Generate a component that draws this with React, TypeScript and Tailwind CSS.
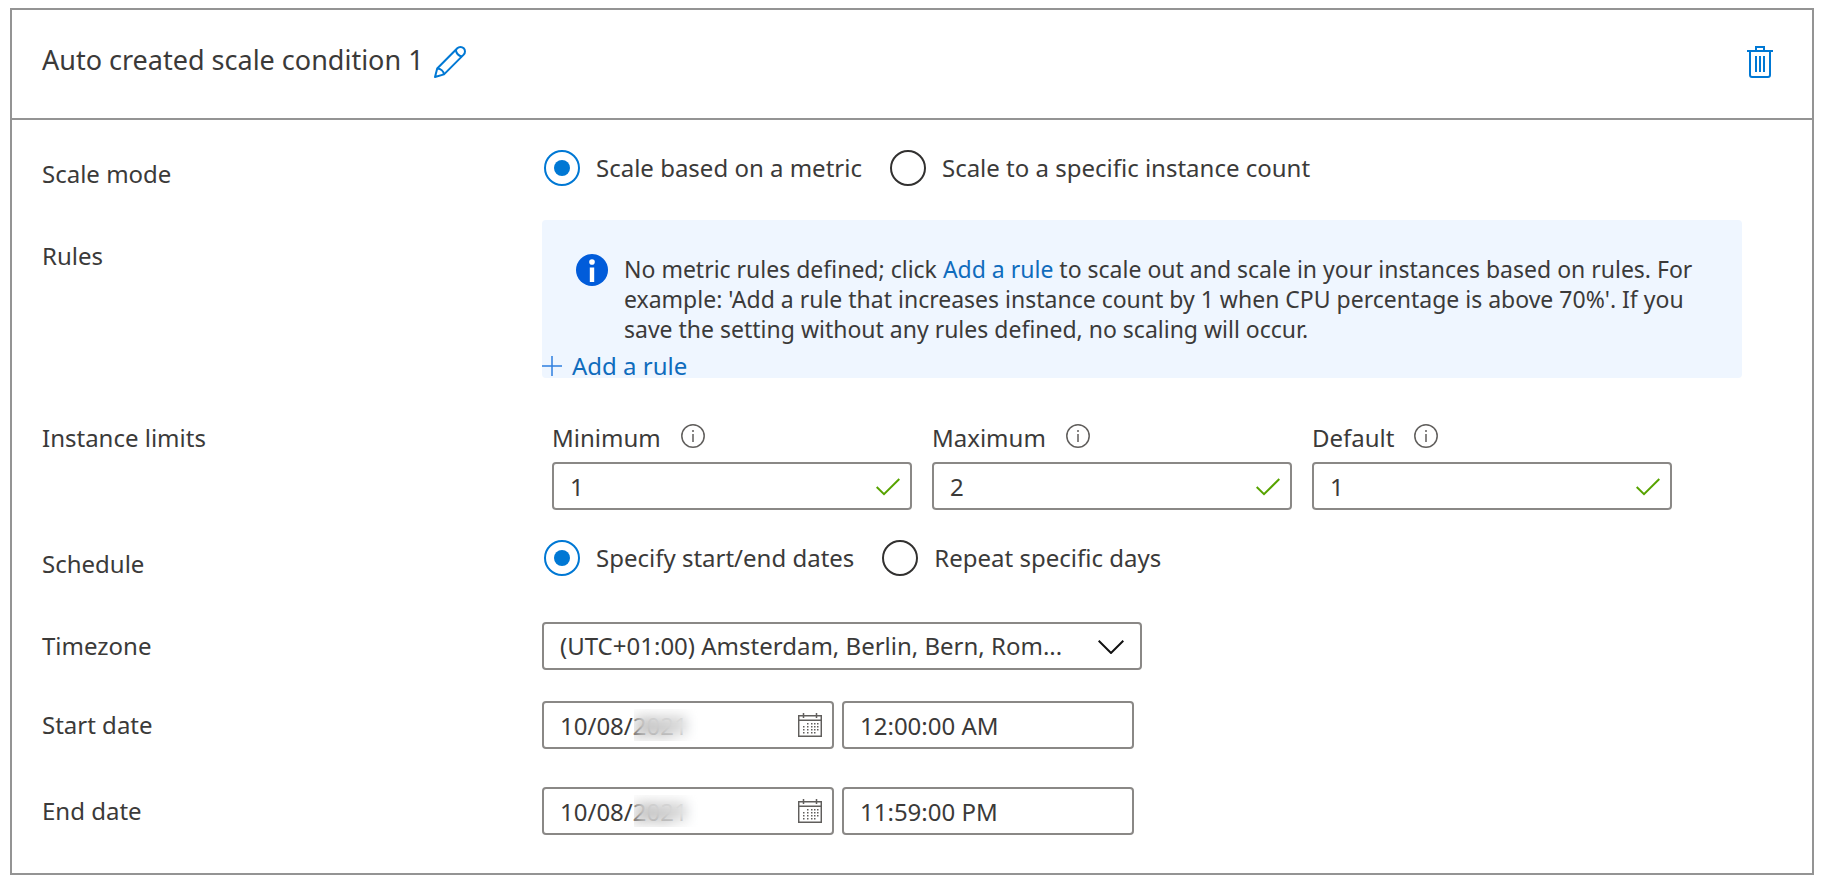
import { useId, useState, type ReactNode } from "react";

function PencilIcon() {
  return (
    <svg width="32" height="32" viewBox="0 0 32 32" fill="none" stroke="#0078d4" strokeWidth="2" strokeLinejoin="round" aria-hidden="true">
      <path d="M1 31 3.200 22.500 23.300 2.300C25 .6 28 .6 29.700 2.300s1.700 4.600 0 6.300L10 28.400Z" />
      <path d="M3.200 22.500c3.400.2 6.400 2.400 6.800 5.900M21.800 4c.6 3.600 2.600 5.900 6.200 6.400" />
    </svg>
  );
}

function TrashIcon() {
  return (
    <svg width="26" height="32" viewBox="0 0 26 32" fill="none" stroke="#0078d4" strokeWidth="2" aria-hidden="true">
      <path d="M0 5h26M9 4V1h8v3M3 5v24a2 2 0 0 0 2 2h16a2 2 0 0 0 2-2V5M9 10v16M13 10v16M17 10v16" />
    </svg>
  );
}

function InfoBadge() {
  return (
    <svg width="32" height="32" viewBox="0 0 32 32" aria-hidden="true" className="shrink-0">
      <circle cx="16" cy="16" r="16" fill="#015cda" />
      <circle cx="16" cy="8" r="2.800" fill="#fff" />
      <rect x="13.800" y="13.500" width="4.400" height="14.500" fill="#fff" />
    </svg>
  );
}

function InfoOutline() {
  return (
    <svg width="24" height="24" viewBox="0 0 24 24" fill="none" stroke="#605e5c" strokeWidth="1.500" aria-hidden="true">
      <circle cx="12" cy="12" r="11.200" />
      <path d="M12 10v8M12 6v2" />
    </svg>
  );
}

function CheckIcon() {
  return (
    <svg width="24" height="18" viewBox="0 0 24 18" fill="none" stroke="#57a300" strokeWidth="2" aria-hidden="true">
      <path d="M.7 9 8 16.200 23.300 1" />
    </svg>
  );
}

function ChevronIcon() {
  return (
    <svg width="26" height="14" viewBox="0 0 26 14" fill="none" stroke="#111" strokeWidth="2" aria-hidden="true">
      <path d="M.7.7 13 13 25.300.7" />
    </svg>
  );
}

function CalendarIcon() {
  const dots = [
    [9, 10], [13, 10], [16, 10], [19, 10],
    [5, 13], [9, 13], [13, 13], [16, 13], [19, 13],
    [5, 16], [9, 16], [13, 16], [16, 16], [19, 16],
    [5, 19], [9, 19], [13, 19], [16, 19],
  ];
  return (
    <svg width="24" height="24" viewBox="0 0 24 24" fill="none" stroke="#605e5c" strokeWidth="1.500" aria-hidden="true">
      <path d="M.7 2.700h22.600v20.600H.7ZM.7 7.200h22.600M5.500 0v5M18.500 0v5" />
      {dots.map(([x, y]) => (
        <rect key={`${x}-${y}`} x={x} y={y} width="1.500" height="1.500" fill="#605e5c" stroke="none" />
      ))}
    </svg>
  );
}

function Row({ label, offset = "pt-1.5", children }: { label: string; offset?: string; children: ReactNode }) {
  return (
    <div className="flex items-start">
      <div className={`w-[500px] shrink-0 ${offset}`}>{label}</div>
      <div className="min-w-0 grow">{children}</div>
    </div>
  );
}

function RadioGroup({ name, options }: { name: string; options: string[] }) {
  const [value, setValue] = useState(options[0]);
  return (
    <div role="radiogroup" aria-label={name} className="ml-0.5 flex gap-7">
      {options.map((option) => (
        <label key={option} className="flex items-center gap-4">
          <input
            type="radio"
            name={name}
            checked={value === option}
            onChange={() => setValue(option)}
            className="size-9 shrink-0 appearance-none rounded-full border-2 border-[#323130] bg-white p-2 checked:border-[#0078d4] checked:bg-[#0078d4] checked:bg-clip-content"
          />
          <span>{option}</span>
        </label>
      ))}
    </div>
  );
}

const field = "h-12 w-full rounded-sm border-2 border-[#8a8886] bg-white pl-4 text-[#3b3a39]";

function LimitField({ label, initial }: { label: string; initial: string }) {
  const id = useId();
  const [value, setValue] = useState(initial);
  return (
    <div className="flex max-w-[360px] grow flex-col gap-1.5">
      <div className="flex gap-5">
        <label htmlFor={id}>{label}</label>
        <button type="button" aria-label={`About ${label}`} className="mt-1 flex h-6">
          <InfoOutline />
        </button>
      </div>
      <div className="relative">
        <input id={id} value={value} onChange={(e) => setValue(e.target.value)} className={field} />
        <span className="absolute top-4 right-3">
          <CheckIcon />
        </span>
      </div>
    </div>
  );
}

function DateTime({ label, date, time }: { label: string; date: string; time: string }) {
  const [day, setDay] = useState(date);
  const [hour, setHour] = useState(time);
  return (
    <div className="flex gap-2">
      <div className="relative w-[292px]">
        <input aria-label={label} value={day} onChange={(e) => setDay(e.target.value)} className={field} />
        <span className="absolute top-2 left-[92px] h-8 w-16 backdrop-blur-[7px]" />
        <button type="button" aria-label="Pick a date" className="absolute top-3 right-3">
          <CalendarIcon />
        </button>
      </div>
      <div className="w-[292px]">
        <input aria-label={`${label} time`} value={hour} onChange={(e) => setHour(e.target.value)} className={field} />
      </div>
    </div>
  );
}

export default function App() {
  return (
    <main className="bg-white pt-2 pr-3.5 pb-3 pl-2.5 font-['Noto_Sans','Open_Sans',sans-serif] text-[24px] leading-9 text-[#3b3a39]">
      <section className="border-2 border-[#949494]">
        <header className="flex items-start justify-between border-b-2 border-[#949494] pt-8 pr-[39px] pb-10 pl-[30px]">
          <div className="flex items-start gap-2.5">
            <h1 className="text-[27px]">Auto created scale condition 1</h1>
            <button type="button" aria-label="Rename condition" className="mt-1 flex h-8">
              <PencilIcon />
            </button>
          </div>
          <button type="button" aria-label="Delete condition" className="mt-1 flex h-8">
            <TrashIcon />
          </button>
        </header>

        <div className="flex flex-col pt-[30px] pb-[38px] pl-[30px]">
          <Row label="Scale mode">
            <RadioGroup name="Scale mode" options={["Scale based on a metric", "Scale to a specific instance count"]} />
          </Row>

          <div className="mt-7">
            <Row label="Rules" offset="pt-[18px]">
              <div className="mr-[70px] flex gap-4 rounded-sm bg-[#eff6ff] p-[34px]">
                <InfoBadge />
                <p className="text-[23px] leading-[30px]">
                  No metric rules defined; click{" "}
                  <a href="#add-rule" className="text-[#0f6cbd]">
                    Add a rule
                  </a>{" "}
                  to scale out and scale in your instances based on rules. For example: 'Add a rule that increases
                  instance count by 1 when CPU percentage is above 70%'. If you save the setting without any rules
                  defined, no scaling will occur.
                </p>
              </div>
              <button type="button" className="relative -mt-[27px] flex items-center gap-2.5 leading-[30px] text-[#0f6cbd]">
                <svg width="20" height="20" viewBox="0 0 20 20" fill="none" stroke="#2f7fe0" strokeWidth="1.500" aria-hidden="true">
                  <path d="M0 10h20M10 0v20" />
                </svg>
                Add a rule
              </button>
            </Row>
          </div>

          <div className="mt-[39px]">
            <Row label="Instance limits" offset="pt-0">
              <div className="mr-[140px] ml-2.5 flex gap-5">
                <LimitField label="Minimum" initial="1" />
                <LimitField label="Maximum" initial="2" />
                <LimitField label="Default" initial="1" />
              </div>
            </Row>
          </div>

          <div className="mt-[30px]">
            <Row label="Schedule">
              <RadioGroup name="Schedule" options={["Specify start/end dates", "Repeat specific days"]} />
            </Row>
          </div>

          <div className="mt-10">
            <Row label="Timezone">
              <div className="relative w-[600px]">
                <select aria-label="Timezone" className={`${field} appearance-none pr-16`}>
                  <option>(UTC+01:00) Amsterdam, Berlin, Bern, Rom...</option>
                </select>
                <span className="pointer-events-none absolute top-[18px] right-[18px] flex">
                  <ChevronIcon />
                </span>
              </div>
            </Row>
          </div>

          <div className="mt-[31px]">
            <Row label="Start date">
              <DateTime label="Start date" date="10/08/2021" time="12:00:00 AM" />
            </Row>
          </div>

          <div className="mt-[38px]">
            <Row label="End date">
              <DateTime label="End date" date="10/08/2021" time="11:59:00 PM" />
            </Row>
          </div>
        </div>
      </section>
    </main>
  );
}
